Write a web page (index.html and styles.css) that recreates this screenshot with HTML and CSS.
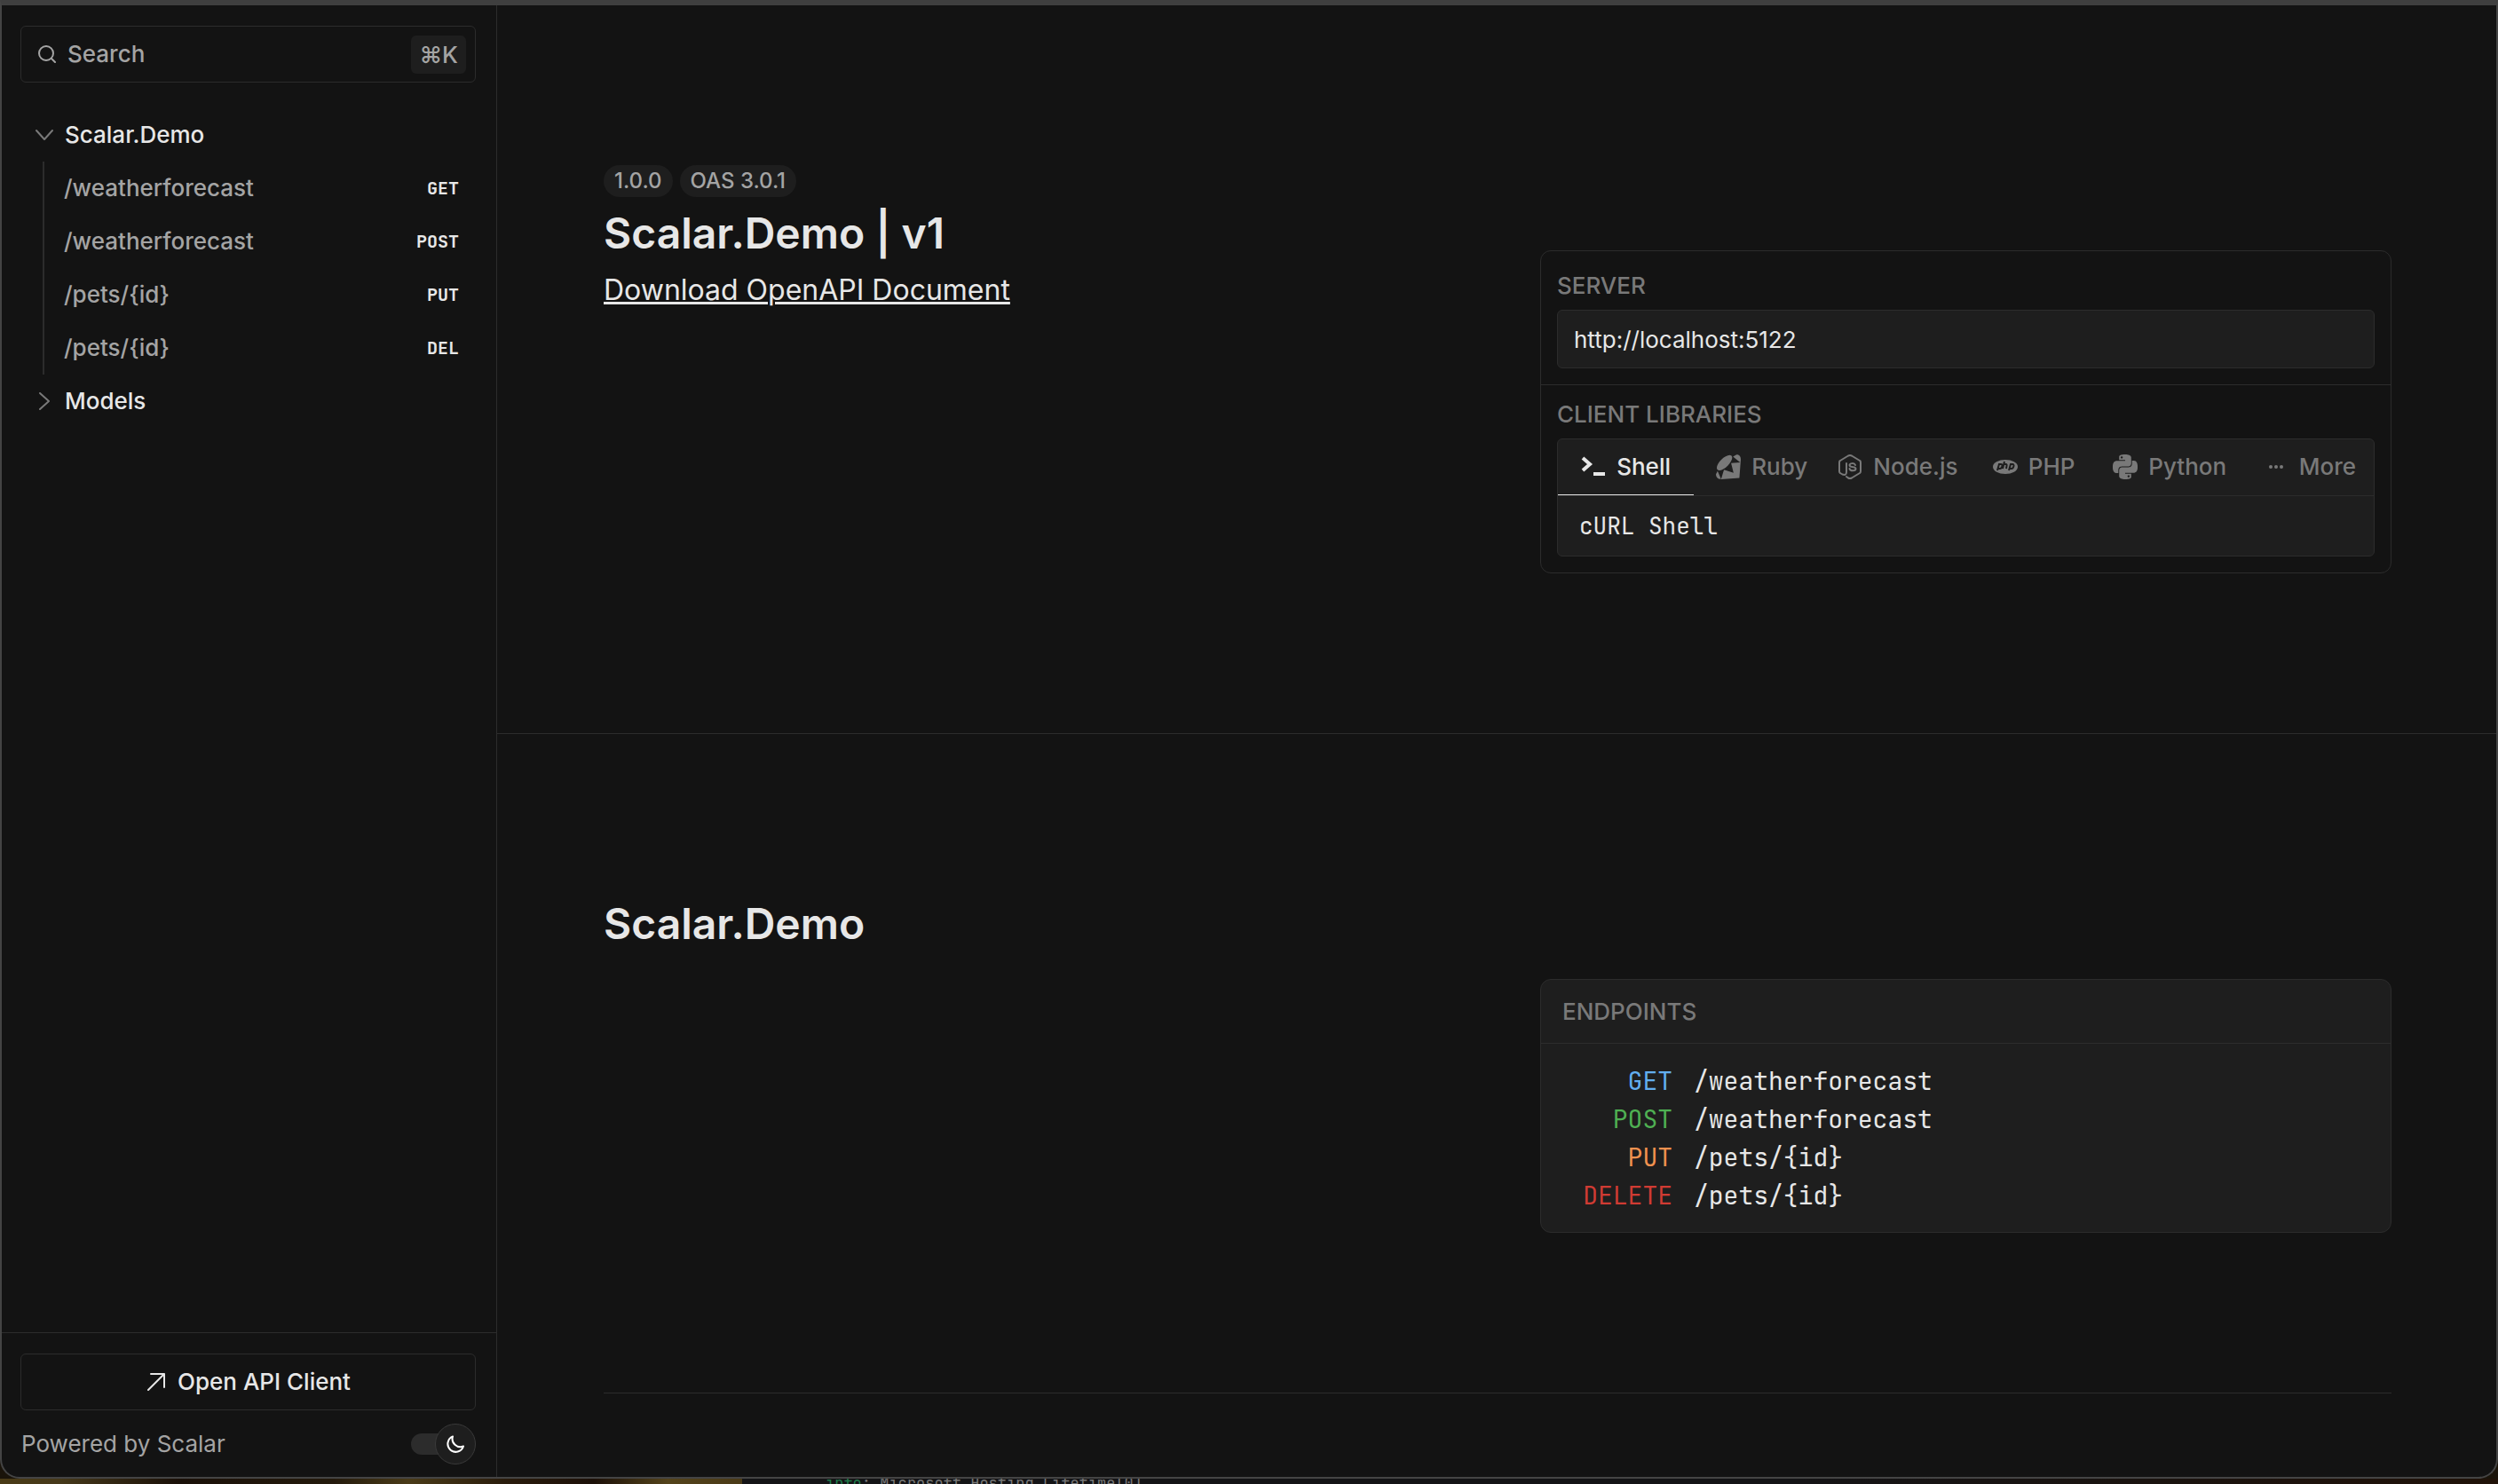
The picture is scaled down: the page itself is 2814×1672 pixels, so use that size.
FILE: index.html
```html
<!DOCTYPE html>
<html lang="en">
<head>
<meta charset="utf-8">
<meta name="viewport" content="width=device-width, initial-scale=1">
<title>Scalar.Demo | v1</title>
<link rel="stylesheet" href="styles.css">
</head>
<body>
<div class="window">
  <aside class="sidebar">
    <div class="search-area">
      <button class="search" type="button">
        <svg class="search-icon" viewBox="0 0 20 20" fill="none" stroke="currentColor" stroke-width="2" stroke-linecap="round"><circle cx="9" cy="9" r="8"/><path d="M15 15l4 4"/></svg>
        <span>Search</span>
        <kbd>⌘K</kbd>
      </button>
    </div>
    <nav class="tree">
      <a class="node" href="#demo">
        <svg class="chevron" viewBox="0 0 20 20" fill="none" stroke="currentColor" stroke-width="2" stroke-linecap="round" stroke-linejoin="round"><path d="M1 5l9 10 9-10"/></svg>
        Scalar.Demo
      </a>
      <ul class="children">
        <li><a href="#get">/weatherforecast<span class="verb">GET</span></a></li>
        <li><a href="#post">/weatherforecast<span class="verb">POST</span></a></li>
        <li><a href="#put">/pets/{id}<span class="verb">PUT</span></a></li>
        <li><a href="#del">/pets/{id}<span class="verb">DEL</span></a></li>
      </ul>
      <a class="node" href="#models">
        <svg class="chevron" viewBox="0 0 20 20" fill="none" stroke="currentColor" stroke-width="2" stroke-linecap="round" stroke-linejoin="round"><path d="M5 1l10 9-10 9"/></svg>
        Models
      </a>
    </nav>
    <div class="sidebar-footer">
      <button class="client-button" type="button">
        <svg class="arrow-icon" viewBox="0 0 20 20" fill="none" stroke="currentColor" stroke-width="2" stroke-linecap="round" stroke-linejoin="round"><path d="M1 19L19 1M4 1h15v15"/></svg>
        Open API Client
      </button>
      <div class="powered">
        <a href="#scalar">Powered by Scalar</a>
        <label class="theme">
          <input type="checkbox" checked aria-label="Dark mode">
          <span class="knob"><svg viewBox="0 0 20 20" fill="none" stroke="currentColor" stroke-width="2" stroke-linejoin="round"><path d="M7 1.500A9 9 0 1 0 19 12.500A9 9 0 0 1 7 1.500z"/></svg></span>
        </label>
      </div>
    </div>
  </aside>

  <main class="content">
    <section class="section intro">
      <div class="column">
        <div class="badges"><span>1.0.0</span><span>OAS 3.0.1</span></div>
        <h1>Scalar.Demo | v1</h1>
        <a class="download" href="#openapi">Download OpenAPI Document</a>
      </div>
      <div class="card">
        <div class="card-part">
          <label class="caption" for="server">Server</label>
          <input class="server" id="server" type="text" value="http://localhost:5122">
        </div>
        <div class="card-part">
          <div class="caption">Client Libraries</div>
          <div class="libraries">
            <div class="tabs" role="tablist">
              <button type="button" role="tab" class="tab active" aria-selected="true"><svg viewBox="0 0 28 28" fill="none" stroke="currentColor" stroke-width="4"><path d="M2 4l8 7-8 7M14 22h13"/></svg>Shell</button>
              <button type="button" role="tab" class="tab"><svg viewBox="0 0 24 24" fill="currentColor"><path d="M20.156.083c3.033.525 3.893 2.598 3.829 4.770L24 4.822 22.635 22.710 4.890 23.926h.016C3.433 23.864.150 23.729 0 19.139l1.645-3 2.819 6.586.503 1.172 2.805-9.144-.030.007.016-.030 9.255 2.956-1.396-5.431-.990-3.900 8.820-.569-.615-.510L16.500 2.114 20.159.073zM5.130 5.073c3.561-3.533 8.157-5.621 9.922-3.840 1.762 1.777-.105 6.105-3.673 9.636-3.563 3.532-8.103 5.734-9.864 3.957-1.766-1.777.045-6.217 3.612-9.750z"/></svg>Ruby</button>
              <button type="button" role="tab" class="tab"><svg viewBox="0 0 28 28" fill="none" stroke="currentColor" stroke-width="2" stroke-linejoin="round" stroke-linecap="round"><path d="M10 25l2 1.500q2 1 4 0l9-5.500q1-.500 1-2V9q0-1.500-1-2L16 1.500q-2-1-4 0L3 7Q2 7.500 2 9v10q0 1.500 1 2l2.500 1.500Q10 24 10 20V10M20 12c-1-3-6.500-2-6.500 0 0 3.500 7 1 7 4 0 3-6.500 3-7 0"/></svg>Node.js</button>
              <button type="button" role="tab" class="tab"><svg viewBox="0 0 28 28"><ellipse cx="14" cy="14" rx="14" ry="8" fill="currentColor"/><g fill="none" stroke="#1e1e1e" stroke-width="2"><path d="M5 18l2-7h2c3 0 1 5-1 5H6M13 8l-2 8M12 11h2c2 0 2 0 1 5M18 18l2-7h2c3 0 1 5-1 5h-2"/></g></svg>PHP</button>
              <button type="button" role="tab" class="tab"><svg viewBox="0 0 24 24" fill="currentColor"><path d="M14.250.180l.900.200.730.260.590.300.450.320.340.340.250.340.160.330.100.300.040.260.020.200-.010.130V8.500l-.050.630-.130.550-.210.460-.260.380-.300.310-.330.250-.350.190-.350.140-.330.100-.300.070-.260.040-.210.020H8.770l-.690.050-.590.140-.500.220-.410.270-.330.320-.270.350-.200.360-.150.370-.100.350-.070.320-.040.270-.020.210v3.060H3.170l-.210-.030-.280-.070-.320-.120-.350-.180-.360-.260-.360-.360-.350-.460-.320-.590-.280-.730-.210-.880-.140-1.050-.050-1.230.060-1.220.160-1.040.240-.870.320-.710.360-.570.400-.440.420-.330.420-.240.400-.160.360-.100.320-.050.240-.010h.160l.060.010h8.160v-.830H6.180l-.010-2.750-.020-.370.050-.340.110-.310.170-.280.250-.260.310-.230.380-.200.440-.180.510-.150.580-.120.640-.100.710-.060.770-.040.840-.020 1.270.050zm-6.300 1.980l-.230.330-.080.410.080.410.230.340.330.220.410.090.410-.090.330-.220.230-.340.080-.410-.080-.410-.230-.330-.330-.220-.410-.090-.410.090zm13.090 3.950l.280.060.320.120.350.180.360.270.360.350.350.470.320.590.280.730.210.880.140 1.040.050 1.230-.060 1.230-.160 1.040-.240.860-.320.710-.360.570-.400.450-.420.330-.420.240-.400.160-.360.090-.320.050-.240.020-.160-.010h-8.220v.820h5.840l.010 2.760.020.360-.050.340-.110.310-.170.290-.250.250-.310.240-.380.200-.440.170-.510.150-.580.130-.640.090-.710.070-.770.040-.840.010-1.270-.040-1.070-.140-.900-.200-.730-.250-.590-.300-.450-.330-.340-.340-.250-.340-.160-.330-.100-.300-.040-.250-.020-.200.010-.130v-5.340l.050-.640.130-.540.210-.460.260-.380.300-.320.330-.240.350-.200.350-.140.330-.100.300-.060.260-.040.210-.020.130-.010h5.840l.690-.050.590-.140.500-.210.410-.280.330-.320.270-.350.200-.360.150-.360.100-.350.070-.320.040-.280.020-.210V6.070h2.090l.140.010zm-6.470 14.250l-.230.330-.080.410.080.410.230.330.330.230.410.080.410-.080.330-.230.230-.330.080-.410-.080-.410-.230-.330-.330-.230-.410-.080-.410.080z"/></svg>Python</button>
              <button type="button" role="tab" class="tab more"><svg viewBox="0 0 28 28" fill="currentColor"><circle cx="8" cy="14" r="2"/><circle cx="14" cy="14" r="2"/><circle cx="20" cy="14" r="2"/></svg>More</button>
            </div>
            <div class="library">cURL Shell</div>
          </div>
        </div>
      </div>
    </section>

    <section class="section group">
      <div class="column"><h2>Scalar.Demo</h2></div>
      <div class="card endpoints">
        <h3 class="caption">Endpoints</h3>
        <ul class="endpoint-list">
          <li><a href="#get"><span class="get">GET</span>/weatherforecast</a></li>
          <li><a href="#post"><span class="post">POST</span>/weatherforecast</a></li>
          <li><a href="#put"><span class="put">PUT</span>/pets/{id}</a></li>
          <li><a href="#del"><span class="delete">DELETE</span>/pets/{id}</a></li>
        </ul>
      </div>
    </section>
  </main>
</div>
<div class="desktop">
  <div class="wallpaper"></div>
  <div class="terminal"><span class="level">info</span>: Microsoft.Hosting.Lifetime[0]</div>
</div>
</body>
</html>
```
FILE: styles.css
```css
:root {
  --bg: #131313;
  --bg-2: #1e1e1e;
  --line: #2c2c2c;
  --text: #e7e7e7;
  --text-2: #a4a4a4;
  --text-3: #797979;
  --sans: Inter, "Liberation Sans", sans-serif;
  --mono: "JetBrains Mono", "DejaVu Sans Mono", monospace;
}

* { box-sizing: border-box; }

body {
  margin: 0;
  min-height: 100vh;
  display: flex;
  flex-direction: column;
  background: #1a140a;
  color: var(--text);
  font: 500 26px/36px var(--sans);
}

a { color: inherit; text-decoration: none; }
ul { list-style: none; margin: 0; padding: 0; }
button { font: inherit; color: inherit; background: none; border: 0; padding: 0; }
svg { display: block; flex: none; }
h1, h2, h3 { margin: 0; }

.window {
  flex: 1;
  display: grid;
  grid-template-columns: 558px 1fr;
  background: var(--bg);
  border: 2px solid #444;
  border-top: 6px solid #3f3f3f;
  border-radius: 0 0 22px 22px;
  overflow: hidden;
}

/* Sidebar */
.sidebar {
  display: flex;
  flex-direction: column;
  border-right: 1px solid var(--line);
}
.search-area { padding: 23px 23px 0 21px; }
.search {
  display: flex;
  align-items: center;
  gap: 13px;
  width: 100%;
  height: 64px;
  padding: 0 10px 0 19px;
  border: 1px solid var(--line);
  border-radius: 6px;
  color: var(--text-2);
}
.search-icon { width: 20px; height: 20px; }
.search kbd {
  margin-left: auto;
  padding: 4px 9px 3px;
  border-radius: 6px;
  background: var(--bg-2);
  font: inherit;
}
.tree { flex: 1; padding: 29px 23px 0 38px; }
.node {
  display: flex;
  align-items: center;
  gap: 13px;
  height: 60px;
}
.chevron { width: 20px; height: 20px; color: var(--text-3); }
.children {
  margin-left: 8px;
  border-left: 2px solid var(--line);
}
.children a {
  display: flex;
  align-items: center;
  justify-content: space-between;
  height: 60px;
  padding: 0 19px 0 22px;
  color: var(--text-2);
}
.verb { font: bold 20px/24px var(--mono); color: var(--text); }
.sidebar-footer {
  padding: 23px 23px 14px 21px;
  border-top: 1px solid var(--line);
}
.client-button {
  display: flex;
  align-items: center;
  justify-content: center;
  gap: 14px;
  width: 100%;
  height: 64px;
  padding-left: 2px;
  border: 1px solid var(--line);
  border-radius: 6px;
}
.arrow-icon { width: 20px; height: 20px; }
.powered {
  display: flex;
  align-items: center;
  justify-content: space-between;
  margin-top: 15px;
  padding-left: 1px;
  color: var(--text-2);
  font-weight: 400;
}
.theme {
  position: relative;
  display: flex;
  align-items: center;
  justify-content: flex-end;
  width: 73px;
  height: 46px;
}
.theme input {
  appearance: none;
  position: absolute;
  left: 0;
  margin: 0;
  width: 60px;
  height: 24px;
  border-radius: 12px;
  background: #2c2c2c;
}
.knob {
  position: relative;
  display: grid;
  place-items: center;
  width: 46px;
  height: 46px;
  border: 1px solid #3a3a3a;
  border-radius: 50%;
  background: var(--bg-2);
  color: #fff;
}
.knob svg { width: 20px; height: 20px; }

/* Content */
.content { min-width: 0; }
.section {
  display: grid;
  grid-template-columns: 1fr 1fr;
  gap: 96px;
  padding: 180px 0;
  margin: 0 118px 0 120px;
  border-bottom: 1px solid var(--line);
}
.intro { margin: 0; padding: 180px 118px 180px 120px; }
.badges { display: flex; gap: 8px; margin-bottom: 7px; }
.badges span {
  padding: 0 12px;
  border-radius: 18px;
  background: var(--bg-2);
  color: var(--text-2);
  font-size: 24px;
}
h1, h2 { font-weight: 600; font-size: 48px; line-height: 68px; }
.download {
  display: inline-block;
  font-weight: 400;
  font-size: 32px;
  line-height: 60px;
  text-decoration: underline;
  text-decoration-thickness: 3px;
}
.card {
  margin-top: 96px;
  border: 1px solid var(--line);
  border-radius: 12px;
}
.card-part { padding: 16px 18px 18px; }
.card-part + .card-part { padding-top: 10px; border-top: 1px solid var(--line); }
.caption {
  display: block;
  color: var(--text-3);
  font-weight: 500;
  font-size: 26px;
  line-height: 45px;
  text-transform: uppercase;
}
.card-part .caption { padding-bottom: 5px; }
.server {
  display: block;
  width: 100%;
  height: 66px;
  padding: 0 18px;
  border: 1px solid var(--line);
  border-radius: 6px;
  background: var(--bg-2);
  color: var(--text);
  font: 400 26px/36px var(--sans);
}
.libraries {
  border: 1px solid var(--line);
  border-radius: 6px;
  background: var(--bg-2);
}
.tabs {
  display: grid;
  grid-template-columns: repeat(6, 1fr);
  border-bottom: 1px solid var(--line);
}
.tab {
  display: flex;
  align-items: center;
  justify-content: center;
  gap: 12px;
  height: 63px;
  border-bottom: 1px solid transparent;
  color: var(--text-3);
}
.tab svg { width: 28px; height: 28px; }
.tab.active { color: var(--text); border-color: var(--text); }
.tab.more { padding-left: 9px; }
.library {
  padding: 15px 24px;
  font: 400 26px/37px var(--mono);
}

.endpoints { background: var(--bg-2); }
.endpoints .caption {
  padding: 13px 24px;
  border-bottom: 1px solid var(--line);
}
.endpoint-list {
  padding: 20px 24px;
  font: 400 28px/43px var(--mono);
}
.endpoint-list a { display: flex; gap: 24px; }
.endpoint-list span { width: 124px; text-align: right; }
.get { color: #62aeef; }
.post { color: #4fb053; }
.put { color: #f0914f; }
.delete { color: #d03b33; }

/* Desktop strip visible below the window */
.desktop { display: flex; height: 6px; overflow: hidden; }
.wallpaper {
  width: 836px;
  background: linear-gradient(90deg, #4a3b16, #46391a 8%, #1a1008 24%, #241a0c 45%, #4a3b18 55%, #2a1c0c 68%, #1c1008 80%, #54431b 90%, #4a3a17);
}
.terminal {
  flex: 1;
  padding-left: 94px;
  background: linear-gradient(90deg, #141416 60%, #201208);
  color: #787878;
  font: 400 17px/10px var(--mono);
  white-space: pre;
}
.level { color: #1f7a4a; }
```
